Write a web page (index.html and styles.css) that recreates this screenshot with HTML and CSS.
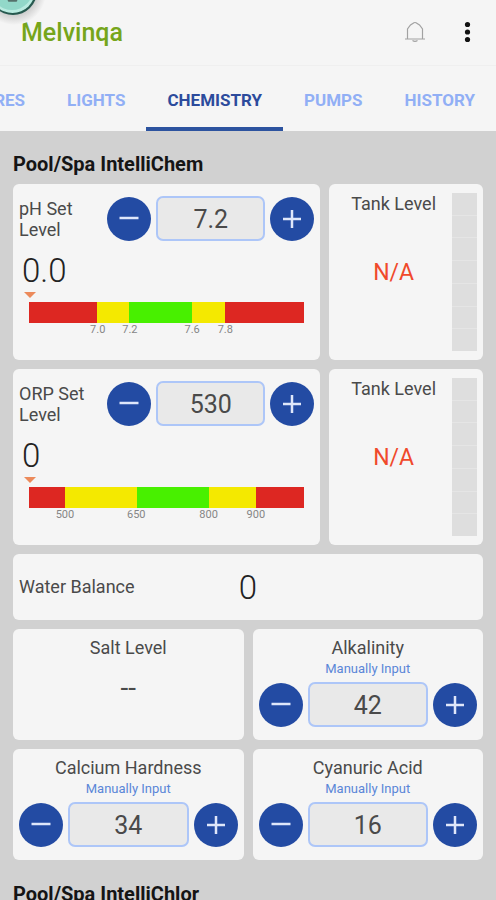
FILE: index.html
```html
<!DOCTYPE html>
<html lang="en">
<head>
<meta charset="utf-8">
<meta name="viewport" content="width=device-width, initial-scale=1">
<title>Melvinqa</title>
<link rel="stylesheet" href="styles.css">
</head>
<body>
<svg class="bubble" viewBox="0 0 52 28" aria-hidden="true">
  <defs>
    <radialGradient id="halo" gradientUnits="userSpaceOnUse" cx="14" cy="-7" r="32">
      <stop offset=".7" stop-color="#d0d0d0"/>
      <stop offset="1" stop-color="#f5f5f5"/>
    </radialGradient>
  </defs>
  <circle cx="14" cy="-7" r="32" fill="url(#halo)"/>
  <circle cx="13" cy="-9" r="24" fill="#27594f"/>
  <circle cx="12.500" cy="-9.500" r="22.500" fill="#b9ebe0"/>
  <circle cx="12" cy="-11" r="21" fill="#92d8c9"/>
  <path d="M9 .5h7" stroke="#55716b" stroke-width="2.500" stroke-linecap="round"/>
</svg>
<header class="appbar">
  <h1 class="appbar-title">Melvinqa</h1>
  <button class="icon-button" type="button" aria-label="Notifications">
    <svg width="24" height="24" viewBox="0 0 24 24" fill="none" stroke="#a2a2a2" stroke-width="1.200">
      <path d="M4.500 17.500V8L7.500 4L11 1.800Q12 1.200 13 1.800L16.500 4L19.500 8V17.500M2 18H22M9.500 19.500Q12 21.300 14.500 19.500"/>
    </svg>
  </button>
  <button class="icon-button" type="button" aria-label="More options">
    <svg width="24" height="24" viewBox="0 0 24 24" fill="#111">
      <circle cx="12.500" cy="3.500" r="2.600"/><circle cx="12.500" cy="11" r="2.600"/><circle cx="12.500" cy="18.500" r="2.600"/>
    </svg>
  </button>
</header>
<nav class="tabs">
  <a class="tab" href="#features">FEATURES</a>
  <a class="tab" href="#lights">LIGHTS</a>
  <a class="tab active" href="#chemistry" aria-current="page">CHEMISTRY</a>
  <a class="tab" href="#pumps">PUMPS</a>
  <a class="tab" href="#history">HISTORY</a>
</nav>
<main class="content">
  <h2 class="section-title">Pool/Spa IntelliChem</h2>
  <div class="cards">
    <div class="row sensor">
      <section class="card setpoint">
        <div class="setpoint-row">
          <label class="label" for="ph">pH Set Level</label>
          <div class="stepper">
            <button class="round" type="button" aria-label="Decrease pH"><svg viewBox="0 0 44 44"><path d="M12.500 21H31.500"/></svg></button>
            <input class="value" id="ph" type="text" value="7.2">
            <button class="round" type="button" aria-label="Increase pH"><svg viewBox="0 0 44 44"><path d="M13 22H31M22 13V31"/></svg></button>
          </div>
        </div>
        <div class="reading">0.0</div>
        <svg class="pointer" viewBox="0 0 12 6" aria-hidden="true"><path d="M0 0H12L6 6Z"/></svg>
        <div class="scale ph-scale">
          <span class="bad"><b>7.0</b></span><span class="fair"><b>7.2</b></span><span class="good"><b>7.6</b></span><span class="fair"><b>7.8</b></span><span class="bad"></span>
        </div>
      </section>
      <section class="card tank">
        <div class="tank-info">
          <h3 class="label">Tank Level</h3>
          <p class="missing">N/A</p>
        </div>
        <div class="tank-bar"><i></i><i></i><i></i><i></i><i></i><i></i><i></i></div>
      </section>
    </div>
    <div class="row sensor">
      <section class="card setpoint">
        <div class="setpoint-row">
          <label class="label" for="orp">ORP Set Level</label>
          <div class="stepper">
            <button class="round" type="button" aria-label="Decrease ORP"><svg viewBox="0 0 44 44"><path d="M12.500 21H31.500"/></svg></button>
            <input class="value" id="orp" type="text" value="530">
            <button class="round" type="button" aria-label="Increase ORP"><svg viewBox="0 0 44 44"><path d="M13 22H31M22 13V31"/></svg></button>
          </div>
        </div>
        <div class="reading">0</div>
        <svg class="pointer" viewBox="0 0 12 6" aria-hidden="true"><path d="M0 0H12L6 6Z"/></svg>
        <div class="scale orp-scale">
          <span class="bad"><b>500</b></span><span class="fair"><b>650</b></span><span class="good"><b>800</b></span><span class="fair"><b>900</b></span><span class="bad"></span>
        </div>
      </section>
      <section class="card tank">
        <div class="tank-info">
          <h3 class="label">Tank Level</h3>
          <p class="missing">N/A</p>
        </div>
        <div class="tank-bar"><i></i><i></i><i></i><i></i><i></i><i></i><i></i></div>
      </section>
    </div>
    <section class="card balance">
      <h3 class="label">Water Balance</h3>
      <p class="balance-value">0</p>
    </section>
    <div class="row pair">
      <section class="card input-card">
        <h3 class="label">Salt Level</h3>
        <p class="salt">--</p>
      </section>
      <section class="card input-card">
        <label class="label" for="alk">Alkalinity</label>
        <p class="hint">Manually Input</p>
        <div class="stepper">
          <button class="round" type="button" aria-label="Decrease alkalinity"><svg viewBox="0 0 44 44"><path d="M12.500 21H31.500"/></svg></button>
          <input class="value" id="alk" type="text" value="42">
          <button class="round" type="button" aria-label="Increase alkalinity"><svg viewBox="0 0 44 44"><path d="M13 22H31M22 13V31"/></svg></button>
        </div>
      </section>
    </div>
    <div class="row pair">
      <section class="card input-card">
        <label class="label" for="calcium">Calcium Hardness</label>
        <p class="hint">Manually Input</p>
        <div class="stepper">
          <button class="round" type="button" aria-label="Decrease calcium hardness"><svg viewBox="0 0 44 44"><path d="M12.500 21H31.500"/></svg></button>
          <input class="value" id="calcium" type="text" value="34">
          <button class="round" type="button" aria-label="Increase calcium hardness"><svg viewBox="0 0 44 44"><path d="M13 22H31M22 13V31"/></svg></button>
        </div>
      </section>
      <section class="card input-card">
        <label class="label" for="acid">Cyanuric Acid</label>
        <p class="hint">Manually Input</p>
        <div class="stepper">
          <button class="round" type="button" aria-label="Decrease cyanuric acid"><svg viewBox="0 0 44 44"><path d="M12.500 21H31.500"/></svg></button>
          <input class="value" id="acid" type="text" value="16">
          <button class="round" type="button" aria-label="Increase cyanuric acid"><svg viewBox="0 0 44 44"><path d="M13 22H31M22 13V31"/></svg></button>
        </div>
      </section>
    </div>
  </div>
  <h2 class="section-title">Pool/Spa IntelliChlor</h2>
</main>
</body>
</html>
```
FILE: styles.css
```css
* { box-sizing: border-box; }
html { height: 100%; }
body {
  margin: 0;
  height: 100%;
  overflow: hidden;
  background: #d1d1d1;
  color: #4a4a4a;
  font-family: Roboto, "Liberation Sans", sans-serif;
  font-size: 18px;
}
h1, h2, h3, p { margin: 0; font-weight: 400; }
button { border: 0; padding: 0; background: none; }

.bubble {
  position: absolute;
  top: 0;
  left: 0;
  width: 52px;
  height: 28px;
}

.appbar {
  display: flex;
  align-items: center;
  gap: 28px;
  height: 66px;
  padding: 0 17px 0 21px;
  background: #f5f5f5;
  border-bottom: 1px solid #efefef;
}
.appbar-title {
  flex: 1;
  color: #76a51b;
  font-size: 25px;
  font-weight: 500;
}
.icon-button { width: 24px; height: 24px; }
.icon-button svg { display: block; }

.tabs {
  display: flex;
  justify-content: flex-end;
  height: 65px;
  overflow: hidden;
  background: #f5f5f5;
}
.tab {
  flex: none;
  padding: 0 21px;
  border-bottom: 4px solid transparent;
  color: #91aff5;
  font-size: 17px;
  font-weight: 700;
  line-height: 68px;
  text-decoration: none;
}
.tab.active { color: #2c4b9c; border-color: #2c539f; }

.content { padding: 0 13px; }
.section-title {
  padding: 21px 0 7px;
  color: #151515;
  font-size: 20px;
  font-weight: 700;
  line-height: 25px;
}
.cards {
  display: flex;
  flex-direction: column;
  gap: 9px;
  padding-bottom: 1px;
}
.row { display: grid; gap: 9px; }
.sensor { grid-template-columns: 2fr 1fr; }
.pair { grid-template-columns: 1fr 1fr; }
.card {
  min-width: 0;
  padding: 8px 6px;
  border-radius: 6px;
  background: #f5f5f5;
  text-align: center;
}

.label {
  display: block;
  font-size: 18px;
  line-height: 22px;
}
.stepper {
  display: flex;
  align-items: center;
  gap: 5px;
}
.round {
  flex: none;
  width: 44px;
  height: 44px;
  border-radius: 50%;
  background: #234ba3;
}
.round svg {
  display: block;
  fill: none;
  stroke: #dfe7fa;
  stroke-width: 2.5;
}
.value {
  flex: 1;
  min-width: 0;
  height: 45px;
  padding: 2px 0 0;
  border: 2px solid #adc6f8;
  border-radius: 7px;
  background: #e9e9e9;
  color: #4a4a4a;
  font: 400 25px Roboto, "Liberation Sans", sans-serif;
  text-align: center;
}

.setpoint { padding: 12px 6px 21px; text-align: left; }
.setpoint-row {
  display: grid;
  grid-template-columns: 1fr 207px;
  align-items: center;
}
.setpoint-row .label { width: 72px; line-height: 21px; }
.reading {
  padding: 9px 3px 0;
  color: #222;
  font-size: 33px;
  font-weight: 300;
  line-height: 42px;
}
.pointer {
  display: block;
  width: 12px;
  height: 6px;
  margin: 0 5px 4px;
  fill: #ec8a5b;
}
.scale {
  display: grid;
  height: 37px;
  margin: 0 10px;
}
.scale span {
  display: flex;
  justify-content: flex-end;
  height: 20px;
  padding-top: 21px;
  color: #868686;
  font-size: 11px;
  line-height: 14px;
}
/* Each threshold label is centred on the right edge of its band. */
.scale b { margin-right: -8px; font-weight: 400; }
.orp-scale b { margin-right: -9px; }
.ph-scale { grid-template-columns: 68fr 32fr 62fr 33fr 79fr; }
.orp-scale { grid-template-columns: 36fr 71fr 72fr 47fr 48fr; }
.bad { background: #dd2722; }
.fair { background: #f4e900; }
.good { background: #48f000; }

.tank { display: flex; padding: 9px 6px; }
.tank-info { flex: 1; }
.missing {
  padding-top: 40px;
  color: #f0492b;
  font-size: 23px;
  line-height: 36px;
}
.tank-bar {
  display: grid;
  grid-auto-rows: 1fr;
  gap: 1px;
  width: 25px;
  background: #e5e5e5;
}
.tank-bar i { background: #dedede; }

.balance {
  display: grid;
  grid-template-columns: 1fr auto 1fr;
  align-items: center;
  height: 66px;
  text-align: left;
}
.balance-value { color: #222; font-size: 33px; font-weight: 300; }
.input-card { height: 111px; }
.salt { padding-top: 14px; font-size: 28px; line-height: 30px; }
.hint {
  padding: 2px 0 5px;
  color: #5a86d8;
  font-size: 13px;
  line-height: 16px;
}
```
